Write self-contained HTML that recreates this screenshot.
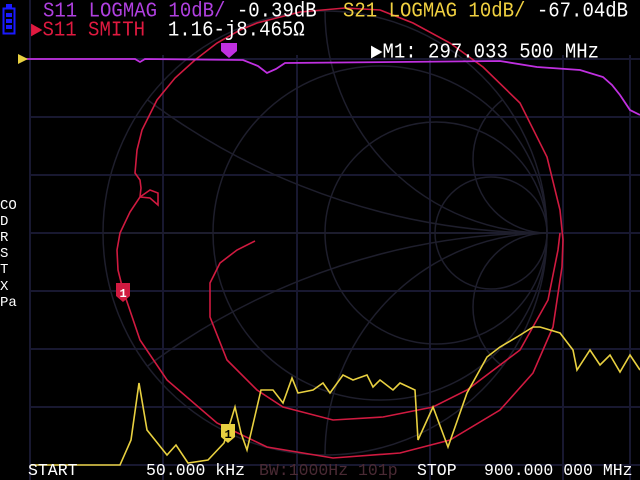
<!DOCTYPE html>
<html style="height:480px;overflow:hidden"><head><meta charset="utf-8"><style>
body{margin:0;background:#000;width:640px;height:480px;overflow:hidden;position:relative;font-family:"Liberation Mono","DejaVu Sans Mono",monospace}
svg{position:absolute;left:0;top:0;overflow:hidden}
.t{position:absolute;white-space:pre;font-size:19px;line-height:19px;transform:scaleY(1.12);transform-origin:0 0}
.b{position:absolute;white-space:pre;font-size:16.5px;line-height:16px;height:16px;overflow:hidden}
.l{position:absolute;left:0;font-size:14px;line-height:14px;color:#fff}
</style></head><body>
<svg width="640" height="480" viewBox="0 0 640 480">
<defs><clipPath id="c"><circle cx="325" cy="233" r="222"/></clipPath></defs>
<g stroke="#181830" stroke-width="2" fill="none">
<path d="M30 0V480M163 55V480M297 55V480M430 55V480M563 55V480M630 55V480"/>
<path d="M30 59H640M30 117H640M30 175H640M30 233H640M30 291H640M30 349H640M30 407H640M30 465H640"/>
</g>
<g stroke="#1e1e2c" stroke-width="1.5" fill="none">
<circle cx="325" cy="233" r="222"/>
<circle cx="380" cy="233" r="167"/>
<circle cx="436" cy="233" r="111"/>
<circle cx="491" cy="233" r="56"/>
<g clip-path="url(#c)">
<circle cx="547" cy="11" r="222"/><circle cx="547" cy="455" r="222"/>
<circle cx="547" cy="159" r="74"/><circle cx="547" cy="307" r="74"/>
<circle cx="547" cy="-433" r="666"/><circle cx="547" cy="899" r="666"/>
<path d="M103 233H547"/>
</g></g>
<polyline fill="none" stroke="#d01a40" stroke-width="1.6" points="123,290 118,270 117,250 120,233 130,212 140,197 141,188 140,180 135,173 137,150 142,130 157,100 175,78 195,60 217,43 240,30 257,23 300,12 345,8 380,10 413,23 450,43 483,67 520,103 547,157 560,210 563,240 562,267 553,327 533,373 500,410 450,440 400,453 333,458 267,447 217,423 167,380 140,340 123,290"/>
<polyline fill="none" stroke="#d01a40" stroke-width="1.6" points="140,197 150,190 158,193 158,205 150,198 140,197"/>
<polyline fill="none" stroke="#d01a40" stroke-width="1.6" points="255,241 237,250 220,263 210,283 210,317 227,360 257,390 283,407 333,420 383,417 433,407 467,390 520,350 548,300 558,250 560,233"/>
<polyline fill="none" stroke="#c030e0" stroke-width="1.8" points="22,59 135,59 140,62 145,59 243,60 258,66 267,73 276,69 285,63 500,61 537,67 580,70 603,77 612,85 620,95 630,110 640,115"/>
<polyline fill="none" stroke="#e8d040" stroke-width="1.6" points="31,465 120,465 131,440 139,383 147,430 155,440 167,455 176,445 188,463 208,460 224,443 235,407 241,433 247,450 261,390 273,390 283,403 292,378 298,393 313,390 323,383 330,393 343,375 353,380 367,375 373,387 380,380 393,390 400,383 415,390 418,440 433,407 448,447 467,393 487,357 500,347 517,337 533,327 540,327 560,333 573,350 577,370 590,350 600,365 610,355 620,372 630,355 640,370"/>
<path d="M18 54L28 59L18 64Z" fill="#e8d040"/>
<g fill="#1a1aff"><rect x="6" y="4" width="6" height="4"/></g>
<rect x="3.5" y="8.5" width="11" height="25" fill="none" stroke="#1a1aff" stroke-width="2"/>
<g fill="#1a1aff"><rect x="6" y="13" width="6" height="4"/><rect x="6" y="19" width="6" height="4"/><rect x="6" y="25" width="6" height="4"/></g>
<path d="M116 283H130V296L123 302L116 296Z" fill="#d01a40"/>
<text x="119.5" y="297" font-family="Liberation Mono" font-size="12" font-weight="bold" fill="#fff">1</text>
<path d="M221 424H235V437L228 443L221 437Z" fill="#e8d040"/>
<text x="224.5" y="438" font-family="Liberation Mono" font-size="12" font-weight="bold" fill="#000">1</text>
<path d="M221 43H237V51L229 58L221 51Z" fill="#c030e0"/>
</svg>
<div class="t" style="left:43px;top:1px"><span style="color:#b040e0">S11 LOGMAG 10dB/</span><span style="color:#fff"> -0.39dB</span></div>
<div class="t" style="left:343px;top:1px"><span style="color:#f0d040">S21 LOGMAG 10dB/</span><span style="color:#fff"> -67.04dB</span></div>
<div class="t" style="left:31px;top:20px"><span style="color:#e01a40">▶S11 SMITH</span><span style="color:#fff">  1.16-j8.465Ω</span></div>
<div class="t" style="left:371px;top:42px;color:#fff">▶M1: 297.033 500 MHz</div>
<div class="l" style="top:199px">CO</div>
<div class="l" style="top:215px">D</div>
<div class="l" style="top:231px">R</div>
<div class="l" style="top:247px">S</div>
<div class="l" style="top:263px">T</div>
<div class="l" style="top:280px">X</div>
<div class="l" style="top:296px">Pa</div>
<div class="b" style="left:28px;top:463px;color:#fff">START</div>
<div class="b" style="left:146px;top:463px;color:#fff">50.000 kHz</div>
<div class="b" style="left:259px;top:463px;color:#4a2a34">BW:1000Hz 101p</div>
<div class="b" style="left:417px;top:463px;color:#fff">STOP</div>
<div class="b" style="left:484px;top:463px;color:#fff">900.000 000 MHz</div>
</body></html>
